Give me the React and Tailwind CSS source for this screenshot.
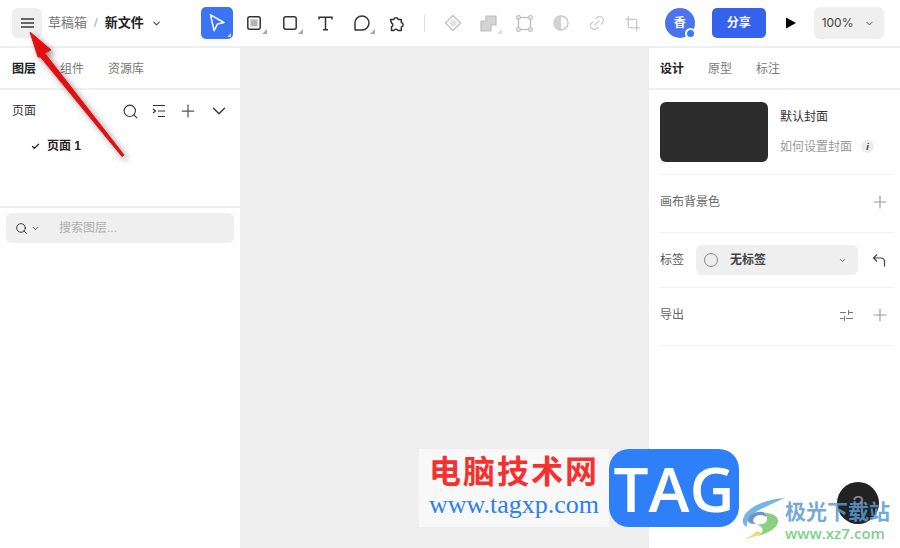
import { Search, Plus, ChevronDown, Check, Link2, Crop } from 'lucide-react';

const font = { fontFamily: '"Liberation Sans", "Noto Sans CJK SC", sans-serif' };

function Corner({ light }) {
  return (
    <span className={`absolute right-[5px] bottom-[5px] w-0 h-0 border-l-[5px] border-b-[5px] border-l-transparent ${light ? 'border-b-[#dcdcdc]' : 'border-b-[#a8a8a8]'}`} />
  );
}

function ToolSlot({ children, corner, light }) {
  return (
    <div className="relative w-9 h-8 flex items-center justify-center shrink-0">
      {children}
      {corner && <Corner light={light} />}
    </div>
  );
}

function Toolbar() {
  return (
    <div className="flex items-center ml-[39px]">
      <div className="relative w-8 h-8 rounded-[5px] bg-[#3b74f5] flex items-center justify-center">
        <svg width="18" height="20" viewBox="0 0 18 20" fill="none" stroke="#fff" strokeWidth="1.5" strokeLinejoin="round">
          <path d="M2.500 1.800 16 9.500l-6.500 1.600-3.400 6.600z" />
        </svg>
        <span className="absolute right-[2px] bottom-[2px] w-0 h-0 border-l-[4px] border-b-[4px] border-l-transparent border-b-[#c5d6fb]" />
      </div>
      <div className="w-[3px]" />
      <ToolSlot corner>
        <svg width="14" height="14" viewBox="0 0 14 14"><rect x="0.800" y="0.800" width="12.400" height="12.400" rx="2" fill="none" stroke="#333" strokeWidth="1.500" /><rect x="3.500" y="3.500" width="7" height="7" fill="#b4b4b4" /></svg>
      </ToolSlot>
      <ToolSlot corner>
        <svg width="14" height="14" viewBox="0 0 14 14"><rect x="0.800" y="0.800" width="12.400" height="12.400" rx="2" fill="none" stroke="#333" strokeWidth="1.500" /></svg>
      </ToolSlot>
      <ToolSlot>
        <svg width="15" height="15" viewBox="0 0 15 15" fill="none" stroke="#333" strokeWidth="1.500"><path d="M1 3.500V1.200h13v2.300M7.500 1.200v12.600M5 13.800h5" /></svg>
      </ToolSlot>
      <ToolSlot corner>
        <svg width="16" height="16" viewBox="0 0 16 16" fill="none" stroke="#333" strokeWidth="1.500"><path d="M1 15V8a7 7 0 1 1 7 7z" strokeLinejoin="round" /></svg>
      </ToolSlot>
      <ToolSlot>
        <svg width="17" height="17" viewBox="0 0 17 17" fill="none" stroke="#333" strokeWidth="1.500" strokeLinejoin="round"><path d="M1.500 4.500h3.200a2.400 2.400 0 0 1 4.600 0h3v3a2.300 2.300 0 0 1 0 4.500v3.500H9a2.200 2.200 0 0 0-4 0H2.500v-3.500a2.200 2.200 0 0 0 0-4z" /></svg>
      </ToolSlot>
      <div className="w-px h-[17px] bg-[#dedede] ml-2" />
      <div className="w-[10px]" />
      <ToolSlot>
        <svg width="18" height="18" viewBox="0 0 18 18" fill="none" stroke="#c4c4c4" strokeWidth="1.400"><path d="M9 1.500 16.500 9 9 16.500 1.500 9z" /><path d="M9 5 13 9 9 13 5 9z" fill="#e2e2e2" stroke="none" /></svg>
      </ToolSlot>
      <ToolSlot corner light>
        <svg width="17" height="17" viewBox="0 0 17 17" fill="#d4d4d4" stroke="#bdbdbd" strokeWidth="1.200"><path d="M6 1h10v9h-5v6H1V6h5z" strokeLinejoin="round" /></svg>
      </ToolSlot>
      <ToolSlot>
        <svg width="17" height="17" viewBox="0 0 17 17" fill="none" stroke="#bdbdbd" strokeWidth="1.300"><rect x="2.500" y="2.500" width="12" height="12" /><circle cx="2.500" cy="2.500" r="1.800" fill="#fff" /><circle cx="14.500" cy="2.500" r="1.800" fill="#fff" /><circle cx="2.500" cy="14.500" r="1.800" fill="#fff" /><circle cx="14.500" cy="14.500" r="1.800" fill="#fff" /></svg>
      </ToolSlot>
      <ToolSlot>
        <svg width="16" height="16" viewBox="0 0 16 16"><circle cx="8" cy="8" r="7" fill="#fff" stroke="#c4c4c4" strokeWidth="1.300" /><path d="M8 1a7 7 0 0 0 0 14z" fill="#d2d2d2" /></svg>
      </ToolSlot>
      <ToolSlot>
        <Link2 size={18} color="#c4c4c4" strokeWidth={1.5} className="-rotate-45" />
      </ToolSlot>
      <ToolSlot>
        <Crop size={17} color="#bdbdbd" strokeWidth={1.5} />
      </ToolSlot>
    </div>
  );
}

function Header() {
  return (
    <header className="h-[48px] flex items-center bg-white border-b-2 border-[#f0f0f0] shrink-0">
      <button className="ml-3 w-[30px] h-[30px] rounded-[6px] bg-[#eeeeee] flex flex-col items-center justify-center gap-[2px]">
        <span className="w-[13px] h-[2px] bg-[#666]" />
        <span className="w-[13px] h-[2px] bg-[#666]" />
        <span className="w-[13px] h-[2px] bg-[#666]" />
      </button>
      <span className="ml-[6px] text-[13px] text-[#777]">草稿箱</span>
      <span className="ml-[7px] text-[13px] text-[#aaa]">/</span>
      <span className="ml-[7px] text-[13px] font-bold text-[#222]">新文件</span>
      <ChevronDown size={11} color="#444" strokeWidth={2.2} className="ml-[7px]" />
      <Toolbar />
      <div className="relative ml-[14px] w-[30px] h-[30px] rounded-full bg-[#4c73ee] flex items-center justify-center text-white text-[12px] font-bold">
        香
        <span className="absolute -right-[1px] -bottom-[1px] w-[11px] h-[11px] rounded-full bg-[#2a7df6] border-2 border-white" />
      </div>
      <button className="ml-[17px] w-[54px] h-[30px] rounded-[5px] bg-[#3563ee] text-white text-[12px] font-bold">分享</button>
      <svg width="12" height="12" viewBox="0 0 12 12" className="ml-[19px]"><path d="M1 0.500 11 6 1 11.500z" fill="#000" /></svg>
      <div className="ml-[17px] w-[70px] h-8 rounded-[6px] bg-[#efefef] flex items-center pl-2 gap-[11px]">
        <span className="text-[12px] text-[#444]" style={{ fontFamily: 'Inter, sans-serif' }}>100%</span>
        <ChevronDown size={11} color="#444" strokeWidth={2} />
      </div>
    </header>
  );
}

function LeftPanel() {
  return (
    <aside className="w-[240px] shrink-0 bg-white flex flex-col">
      <div className="h-[42px] flex items-center gap-6 pl-3 pt-[2px] border-b-2 border-[#f0f0f0] text-[12px] text-[#777]">
        <span className="font-bold text-[#222]">图层</span>
        <span>组件</span>
        <span>资源库</span>
      </div>
      <div className="h-[42px] flex items-center pl-3 text-[12px] text-[#333]">
        <span>页面</span>
        <div className="ml-auto flex items-center gap-[12px] mr-[11px]">
          <Search size={17} color="#333" strokeWidth={1.5} />
          <svg width="16" height="16" viewBox="0 0 16 16" fill="none" stroke="#333" strokeWidth="1.200"><path d="M2 2.500h12M7 8h7M7 13.500h7M2 6l2.500 2L2 10" /></svg>
          <Plus size={20} color="#555" strokeWidth={1.5} className="-mx-[1px]" />
          <ChevronDown size={22} color="#333" strokeWidth={1.4} className="-mx-[1px]" />
        </div>
      </div>
      <div className="h-[28px] flex items-center pl-[31px] text-[12px] font-bold text-[#222]">
        <Check size={9} color="#222" strokeWidth={3.5} />
        <span className="ml-[7px]">页面 1</span>
      </div>
      <div className="h-[48px] border-b-2 border-[#f0f0f0]" />
      <div className="mt-[5px] mx-[6px] h-[30px] rounded-[6px] bg-[#efefef] flex items-center pl-[9px]">
        <Search size={13} color="#333" strokeWidth={1.8} />
        <ChevronDown size={9} color="#333" strokeWidth={2.2} className="ml-[3px]" />
        <span className="ml-[19px] text-[12px] text-[#b0b0b0]">搜索图层...</span>
      </div>
    </aside>
  );
}

function RightPanel() {
  return (
    <aside className="w-[251px] shrink-0 bg-white pl-[11px] pr-[7px] flex flex-col">
      <div className="h-[42px] -ml-[11px] -mr-[7px] pl-[11px] pt-[2px] flex items-center gap-6 border-b-2 border-[#f0f0f0] text-[12px] text-[#777]">
        <span className="font-bold text-[#222]">设计</span>
        <span>原型</span>
        <span>标注</span>
      </div>
      <div className="h-[85px] flex items-center border-b border-[#efefef] pb-[1px]">
        <div className="w-[108px] h-[60px] rounded-[6px] bg-[#2c2c2c]" />
        <div className="ml-3 flex flex-col gap-[14px]">
          <span className="text-[12px] leading-4 text-[#333]">默认封面</span>
          <div className="flex items-center gap-[9px] text-[12px] leading-4 text-[#999]">
            <span>如何设置封面</span>
            <span className="w-[13px] h-[13px] rounded-full bg-[#ececec] flex items-center justify-center text-[9px] font-bold italic text-[#333]">i</span>
          </div>
        </div>
      </div>
      <div className="h-[58px] flex items-center justify-between border-b border-[#efefef] pr-[3px] pb-[3px] text-[12px] text-[#666]">
        <span>画布背景色</span>
        <Plus size={20} color="#999" strokeWidth={1.4} />
      </div>
      <div className="h-[55px] flex items-center border-b border-[#efefef] text-[12px] text-[#555]">
        <span>标签</span>
        <div className="ml-3 w-[162px] h-[30px] rounded-[6px] bg-[#efefef] flex items-center pl-2 text-[#444]">
          <span className="w-[14px] h-[14px] rounded-full border border-[#888]" />
          <span className="ml-3 font-bold text-[#444]">无标签</span>
          <ChevronDown size={9} color="#555" strokeWidth={2.2} className="ml-auto mr-[11px]" />
        </div>
        <svg width="14" height="15" viewBox="0 0 14 15" fill="none" stroke="#444" strokeWidth="1.200" className="ml-[14px]"><path d="M5 1.500 1.500 5 5 8.500M1.500 5H9c2.500 0 3.500 1.800 3.500 4v4.500" /></svg>
      </div>
      <div className="h-[58px] flex items-center border-b border-[#efefef] pr-[3px] pb-[3px] text-[12px] text-[#666]">
        <span>导出</span>
        <svg width="13" height="13" viewBox="0 0 13 13" fill="none" stroke="#777" strokeWidth="1" className="ml-auto mr-[17px]"><path d="M0 3.500H6M8.500 3.500H13M8.500 1v5M0 9.500H3.500M6 9.500H13M4.500 7v5" /></svg>
        <Plus size={20} color="#999" strokeWidth={1.4} />
      </div>
    </aside>
  );
}

function Annotation() {
  return (
    <svg width="140" height="170" viewBox="0 0 140 170" className="absolute left-0 top-0 pointer-events-none" style={{ filter: 'drop-shadow(3px 3px 3px rgba(0,0,0,0.45))' }}>
      <path d="M30 32 51 50 44.500 53 124 155 122 156.500 40.500 57 38 57z" fill="#e40f10" stroke="#e40f10" strokeWidth="1" strokeLinejoin="round" />
    </svg>
  );
}

function Watermarks() {
  return (
    <>
      <div className="absolute left-[837px] top-[482px] w-[42px] h-[42px] rounded-full bg-[#222222] flex items-center justify-center text-[20px] text-[#8a8a8a]">?</div>
      <div className="absolute left-[419px] top-[449px] w-[320px] h-[78px] flex">
        <div className="w-[190px] bg-[#f8f8f8] flex flex-col items-center">
          <span className="text-[32px] leading-[40px] font-bold text-[#f62f2f] tracking-[2px]" style={{ fontFamily: '"Noto Sans CJK SC", sans-serif' }}>电脑技术网</span>
          <span className="text-[26px] leading-[30px] mt-[1px] text-[#2f7ff2] whitespace-nowrap" style={{ fontFamily: '"Liberation Serif", serif' }}>www.tagxp.com</span>
        </div>
        <div className="w-[130px] rounded-[20px] bg-[#2f80f8] flex items-center justify-center text-white text-[62px] font-semibold" style={{ fontFamily: '"Open Sans", sans-serif' }}>TAG</div>
      </div>
      <svg width="44" height="42" viewBox="0 0 44 42" className="absolute left-[742px] top-[498px]" fill="none">
        <path d="M43 0C24 1 4 9 1 21c-1 4 1 7 4 8-1-8 6-14 14-18C27 7 36 3 43 0z" fill="#76b6e6" />
        <path d="M6 22c1-6 9-9 15-8 3 1 4 3 3 5-3-3-9-2-11 0-3 3-2 6 1 7-5 0-8-1-8-4z" fill="#6f93c4" />
        <path d="M15 26c6 1 10-1 10-5 0-2-1-4-3-6 8 0 15 3 14 9-1 7-12 12-21 14 6-3 9-7 0-12z" fill="#8ccf7e" />
        <path d="M3 41c6-1 12-3 17-6l-5-2c-3 3-8 6-12 8z" fill="#e6dc72" />
      </svg>
      <div className="absolute left-[785px] top-[495px] text-[21px] leading-[30px] font-bold text-[#5a9ad6]/85 whitespace-nowrap" style={{ fontFamily: '"Noto Sans CJK SC", sans-serif' }}>极光下载站</div>
      <div className="absolute left-[785px] top-[523px] text-[15px] leading-[20px] font-semibold text-[#7cd08c] whitespace-nowrap" style={{ fontFamily: '"Open Sans", sans-serif' }}>www.xz7.com</div>
    </>
  );
}

export default function App() {
  return (
    <div className="relative w-[900px] h-[548px] overflow-hidden flex flex-col bg-white" style={font}>
      <Header />
      <div className="flex flex-1 min-h-0">
        <LeftPanel />
        <main className="w-[409px] shrink-0 bg-[#eeeeee]" />
        <RightPanel />
      </div>
      <Annotation />
      <Watermarks />
    </div>
  );
}
